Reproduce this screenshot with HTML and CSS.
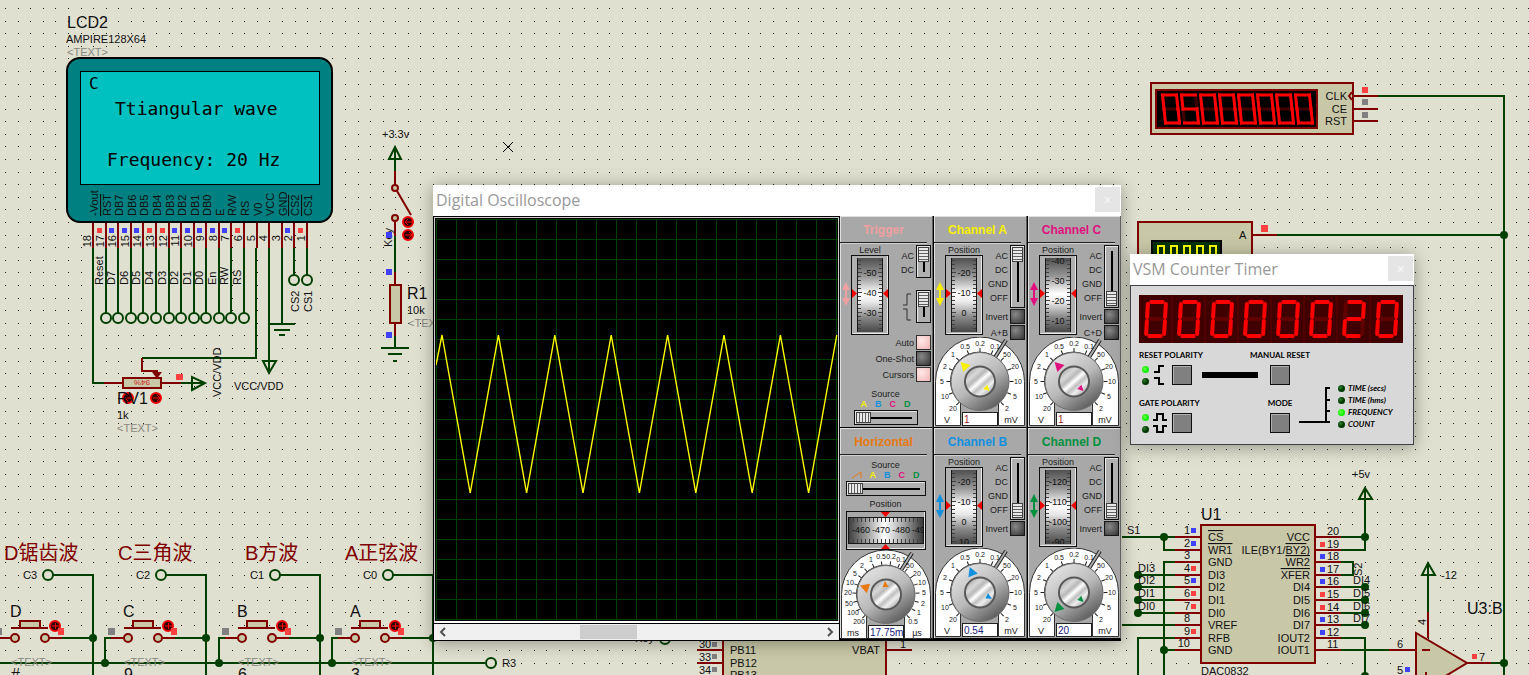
FILE: index.html
```html
<!DOCTYPE html>
<html lang="en">
<head>
    <meta charset="UTF-8">
    <title>Signal generator simulation</title>
    <link rel="stylesheet" href="styles.css">
</head>
<body>
    <main class="board">
        <svg class="schematic" id="schematic">
            <path id="dots" class="dots"></path>

            <!-- LCD -->
            <text x="67" y="28" class="name">LCD2</text>
            <text x="66" y="43">AMPIRE128X64</text>
            <text x="67" y="56" class="muted">&lt;TEXT&gt;</text>
            <rect x="67" y="58" width="265" height="164" rx="13" class="lcd-body"/>
            <rect x="80.5" y="71.5" width="239" height="113" class="lcd-screen"/>
            <text x="89" y="89" class="lcd-text thin">C</text>
            <text x="115" y="115" class="lcd-text">Ttiangular wave</text>
            <text x="107" y="166" class="lcd-text">Frequency: 20 Hz</text>
            <g id="lcd-pins"></g>
            <path class="wire" d="M93 248V383H104M256 248V358H142M269 248V373M282 248V324M269 324H295M274 330H290M279 335H285M294 248V275M307 248V275"/>
            <path class="wire" d="M263 361H276L269 373Z"/>
            <circle cx="294" cy="280" r="5" class="ring"/>
            <circle cx="307" cy="280" r="5" class="ring"/>
            <text transform="translate(299 312) rotate(-90)">CS2</text>
            <text transform="translate(312 312) rotate(-90)">CS1</text>
            <text x="234" y="390">VCC/VDD</text>
            <text transform="translate(221 397) rotate(-90)">VCC/VDD</text>

            <!-- RV1 -->
            <path class="pin" d="M104 383H122M162 383H181M142 358V371H157V377"/>
            <path class="pin solid" d="M154 373H160L157 377Z"/>
            <rect x="123" y="378" width="38" height="10" class="part"/>
            <path class="wire" d="M181 383H205M192 377V390L205 383Z"/>
            <text transform="translate(150 380) rotate(180)" class="wiper">94%</text>
            <rect x="176" y="374" width="7" height="6" class="hi"/>
            <g class="actuator"><circle cx="128" cy="398" r="5"/><path d="M125 398H132M128 395L125 398L128 401"/></g>
            <g class="actuator"><circle cx="156" cy="398" r="5"/><path d="M153 398H160M157 395L160 398L157 401"/></g>
            <text x="117" y="404" class="name">RV1</text>
            <text x="117" y="419">1k</text>
            <text x="117" y="432" class="muted">&lt;TEXT&gt;</text>

            <!-- key switch and R1 -->
            <text x="382" y="138">+3.3v</text>
            <path class="wire" d="M395 147V171M389 159H401L395 147ZM395 236V272M395 336V348M381 348H409M388 354H402M393 361H397"/>
            <path class="pin" d="M395 171V185M395 222V236M395 272V285M395 323V336"/>
            <path class="pin slope" d="M397 191L411 215"/>
            <circle cx="395" cy="188" r="3" class="contact"/>
            <circle cx="395" cy="218" r="3" class="contact"/>
            <rect x="390" y="285" width="11" height="38" class="part"/>
            <text transform="translate(392 247) rotate(-90)">Key</text>
            <path class="lo" d="M386 232h6v6h-6zM386 269h6v6h-6zM386 332h6v6h-6z"/>
            <g class="actuator"><circle cx="408" cy="222" r="5"/><path d="M405 222H412M408 219L405 222L408 225"/></g>
            <g class="actuator"><circle cx="408" cy="235" r="5"/><path d="M405 235H412M409 232L412 235L409 238"/></g>
            <text x="407" y="299" class="name">R1</text>
            <text x="407" y="314">10k</text>
            <text x="408" y="327" class="muted">&lt;TEXT&gt;</text>
            <path class="origin" d="M503 142L513 152M513 142L503 152"/>

            <!-- keypad -->
            <path class="wire" d="M0 663H485"/>
            <g id="keypad"></g>
            <circle cx="491" cy="663" r="5" class="ring"/>
            <text x="502" y="667">R3</text>

            <!-- MCU -->
            <text x="635" y="642">Key</text>
            <circle cx="665" cy="639" r="5" class="ring"/>
            <rect x="723" y="560" width="163" height="140" class="part"/>
            <path class="pin" d="M697 650H722M697 663H722M697 676H722M887 650H912"/>
            <g>
                <text x="699" y="648">30</text><text x="699" y="661">33</text><text x="699" y="674">34</text>
                <text x="730" y="641">PB10</text><text x="730" y="654">PB11</text><text x="730" y="667">PB12</text><text x="730" y="679">PB13</text>
                <text x="880" y="654" class="end">VBAT</text><text x="900" y="648">1</text>
            </g>
            <path class="idle" d="M712 642h5v5h-5zM712 654h5v5h-5zM712 667h5v5h-5z"/>

            <!-- counter -->
            <rect x="1151" y="83" width="202" height="51" class="part"/>
            <rect x="1156" y="90" width="161" height="38" class="counter-screen"/>
            <g id="counter"></g>
            <text x="1347" y="100" class="end">CLK</text>
            <text x="1347" y="113" class="end">CE</text>
            <text x="1347" y="125" class="end">RST</text>
            <path class="pin" d="M1353 96H1378M1353 109H1378M1353 121H1378M1352 92L1349 96L1352 100"/>
            <rect x="1362" y="87" width="6" height="6" class="hi"/>
            <path class="idle" d="M1362 99h6v6h-6zM1362 112h6v6h-6z"/>
            <path class="wire" d="M1378 96H1504V675M1277 235H1504"/>
            <rect x="1138" y="222" width="114" height="60" class="part"/>
            <rect x="1152" y="241" width="69" height="30" class="meter-screen"/>
            <g id="meter"></g>
            <path class="pin" d="M1252 235H1277"/>
            <text x="1239" y="239">A</text>
            <rect x="1261" y="225" width="7" height="7" class="hi"/>
            <circle cx="1504" cy="235" r="4" class="node"/>

            <!-- DAC -->
            <text x="1201" y="520" class="name">U1</text>
            <text x="1201" y="675">DAC0832</text>
            <rect x="1201" y="525" width="114" height="138" class="part"/>
            <g id="dac-pins"></g>
            <path class="wire" d="M1122 537H1175M1164 537V550H1175M1175 562H1164V675M1164 650H1175M1138 575H1175M1138 587H1175M1138 600H1175M1138 613H1175M1122 625H1175M1175 638H1138V675"/>
            <path class="wire" d="M1341 537H1365M1341 550H1365V488M1359 499H1372L1365 488ZM1341 562H1353V575H1341M1341 587H1365M1341 600H1365M1341 613H1365M1341 625H1365M1341 638H1365V675M1341 650H1389"/>
            <g class="node">
                <circle cx="1164" cy="537" r="4"/><circle cx="1164" cy="650" r="4"/>
                <circle cx="1138" cy="575" r="4"/><circle cx="1138" cy="587" r="4"/><circle cx="1138" cy="600" r="4"/><circle cx="1138" cy="613" r="4"/>
                <circle cx="1365" cy="537" r="4"/><circle cx="1365" cy="587" r="4"/><circle cx="1365" cy="600" r="4"/><circle cx="1365" cy="613" r="4"/><circle cx="1365" cy="625" r="4"/><circle cx="1365" cy="676" r="4"/>
            </g>
            <text x="1127" y="534">S1</text>
            <text x="1138" y="572">DI3</text><text x="1138" y="584">DI2</text><text x="1138" y="597">DI1</text><text x="1138" y="610">DI0</text>
            <text x="1353" y="584">DI4</text><text x="1353" y="597">DI5</text><text x="1353" y="610">DI6</text><text x="1353" y="622">DI7</text>
            <text transform="translate(1362 576) rotate(-90)">S2</text>
            <text x="1352" y="478">+5v</text>

            <!-- op-amp -->
            <path class="part slope" d="M1416 633V694L1467 663Z"/>
            <path class="pin" d="M1389 650H1415M1422 650H1430M1428 612V638M1467 663H1491M1426 672V680"/>
            <path class="wire" d="M1428 563V612M1422 575H1435L1428 563ZM1491 663H1504"/>
            <circle cx="1504" cy="663" r="4" class="node"/>
            <text x="1441" y="579">-12</text>
            <text x="1467" y="614" class="name">U3:B</text>
            <text transform="translate(1426 625) rotate(-90)">4</text>
            <text x="1397" y="648">6</text><text x="1397" y="674">5</text><text x="1479" y="661">7</text>
            <rect x="1472" y="654" width="5" height="5" class="hi"/>
            <rect x="1405" y="667" width="5" height="5" class="lo"/>
        </svg>

        <section class="window scope">
            <header class="titlebar"><h1>Digital Oscilloscope</h1><button class="close" aria-label="Close">×</button></header>
            <div class="scope-main">
                <div class="display">
                    <div class="screen"><svg id="plot" width="402" height="401"></svg></div>
                    <div class="scrollbar">
                        <button aria-label="Scroll left"><svg width="8" height="10"><path d="M6 1L2 5L6 9"/></svg></button>
                        <span class="scroll-thumb"></span>
                        <button aria-label="Scroll right"><svg width="8" height="10"><path d="M2 1L6 5L2 9"/></svg></button>
                    </div>
                </div>
                <div class="panels">
                    <section class="panel trigger">
                        <h2>Trigger</h2>
                        <div class="controls">
                            <svg class="arrow" width="10" height="24"><path d="M5 0L9 8H6V16H9L5 24L1 16H4V8H1Z"/></svg>
                            <div class="wheel"><span>Level</span><svg class="drum" data-first="17" data-values="-50,-40,-30"></svg></div>
                            <div class="side">
                                <div class="switch short"><ul><li>AC</li><li>DC</li></ul><input type="range" min="0" max="1" value="0" aria-label="Trigger coupling"></div>
                                <div class="switch edge"><svg width="10" height="30"><path d="M1 13H5V2H9M1 17H5V28H9"/></svg><input type="range" min="0" max="1" value="0" aria-label="Trigger edge"></div>
                                <label class="first">Auto<input type="checkbox" checked></label>
                                <label>One-Shot<input type="checkbox"></label>
                                <label>Cursors<input type="checkbox" checked></label>
                            </div>
                        </div>
                        <div class="source">
                            <label for="trigger-source">Source</label>
                            <div class="letters"><b class="a">A</b><b class="b">B</b><b class="c">C</b><b class="d">D</b></div>
                            <input type="range" id="trigger-source" min="0" max="3" value="0">
                        </div>
                    </section>
                    <section class="panel a">
                        <h2>Channel A</h2>
                        <div class="controls">
                            <svg class="arrow" width="10" height="24"><path d="M5 0L9 8H6V16H9L5 24L1 16H4V8H1Z"/></svg>
                            <div class="wheel"><span>Position</span><svg class="drum" data-first="17" data-values="-20,-10,0"></svg></div>
                            <div class="side">
                                <div class="switch"><ul><li>AC</li><li>DC</li><li>GND</li><li>OFF</li></ul><input type="range" min="0" max="3" value="0" aria-label="Channel A coupling"></div>
                                <label>Invert<input type="checkbox"></label>
                                <label>A+B<input type="checkbox"></label>
                            </div>
                        </div>
                        <div class="dial-box"><svg class="dial" data-big="-45" data-small="135"></svg><input type="text" value="1" aria-label="Channel A scale"></div>
                    </section>
                    <section class="panel c">
                        <h2>Channel C</h2>
                        <div class="controls">
                            <svg class="arrow" width="10" height="24"><path d="M5 0L9 8H6V16H9L5 24L1 16H4V8H1Z"/></svg>
                            <div class="wheel"><span>Position</span><svg class="drum" data-first="5" data-values="-40,-30,-20,-10"></svg></div>
                            <div class="side">
                                <div class="switch"><ul><li>AC</li><li>DC</li><li>GND</li><li>OFF</li></ul><input type="range" min="0" max="3" value="3" aria-label="Channel C coupling"></div>
                                <label>Invert<input type="checkbox"></label>
                                <label>C+D<input type="checkbox"></label>
                            </div>
                        </div>
                        <div class="dial-box"><svg class="dial" data-big="-45" data-small="135"></svg><input type="text" value="1" aria-label="Channel C scale"></div>
                    </section>
                    <section class="panel horizontal">
                        <h2>Horizontal</h2>
                        <div class="source">
                            <label for="time-source">Source</label>
                            <div class="letters"><svg width="10" height="8"><path d="M0 7L9 1V7"/></svg><b class="a">A</b><b class="b">B</b><b class="c">C</b><b class="d">D</b></div>
                            <input type="range" id="time-source" min="0" max="4" value="0">
                        </div>
                        <div class="flat-wheel"><span>Position</span><svg id="time-drum" width="78" height="37"></svg></div>
                        <div class="dial-box"><svg class="dial time" data-big="-71" data-small="-4"></svg><input type="text" value="17.75m" aria-label="Time base"></div>
                    </section>
                    <section class="panel b">
                        <h2>Channel B</h2>
                        <div class="controls">
                            <svg class="arrow" width="10" height="24"><path d="M5 0L9 8H6V16H9L5 24L1 16H4V8H1Z"/></svg>
                            <div class="wheel"><span>Position</span><svg class="drum" data-first="14" data-values="-20,-10,0,10"></svg></div>
                            <div class="side">
                                <div class="switch"><ul><li>AC</li><li>DC</li><li>GND</li><li>OFF</li></ul><input type="range" min="0" max="3" value="3" aria-label="Channel B coupling"></div>
                                <label>Invert<input type="checkbox"></label>
                            </div>
                        </div>
                        <div class="dial-box"><svg class="dial" data-big="-22" data-small="117"></svg><input type="text" value="0.54" aria-label="Channel B scale"></div>
                    </section>
                    <section class="panel d">
                        <h2>Channel D</h2>
                        <div class="controls">
                            <svg class="arrow" width="10" height="24"><path d="M5 0L9 8H6V16H9L5 24L1 16H4V8H1Z"/></svg>
                            <div class="wheel"><span>Position</span><svg class="drum" data-first="14" data-values="-120,-110,-100,-90"></svg></div>
                            <div class="side">
                                <div class="switch"><ul><li>AC</li><li>DC</li><li>GND</li><li>OFF</li></ul><input type="range" min="0" max="3" value="3" aria-label="Channel D coupling"></div>
                                <label>Invert<input type="checkbox"></label>
                            </div>
                        </div>
                        <div class="dial-box"><svg class="dial" data-big="-135" data-small="135"></svg><input type="text" value="20" aria-label="Channel D scale"></div>
                    </section>
                </div>
            </div>
        </section>

        <section class="window timer">
            <header class="titlebar"><h1>VSM Counter Timer</h1><button class="close" aria-label="Close">×</button></header>
            <div class="timer-body">
                <svg id="led" class="led" width="264" height="48"></svg>
                <div class="timer-controls">
                    <div class="polarity">
                        <span>RESET POLARITY</span>
                        <div class="line">
                            <div class="lamps"><i class="lamp on"></i><i class="lamp"></i></div>
                            <svg width="12" height="20"><path d="M1 7H6V1H11M1 13H6V19H11"/></svg>
                            <button class="push" aria-label="Reset polarity"></button>
                            <i class="link"></i>
                        </div>
                    </div>
                    <div class="push-group"><span>MANUAL RESET</span><button class="push" aria-label="Manual reset"></button></div>
                    <div class="polarity">
                        <span>GATE POLARITY</span>
                        <div class="line">
                            <div class="lamps"><i class="lamp on"></i><i class="lamp"></i></div>
                            <svg width="14" height="20"><path d="M0 7H4V1H10V7H14M0 13H4V19H10V13H14"/></svg>
                            <button class="push" aria-label="Gate polarity"></button>
                        </div>
                    </div>
                    <div class="push-group"><span>MODE</span><button class="push" aria-label="Mode"></button></div>
                    <div class="modes">
                        <svg width="32" height="36"><path d="M0 35H31M27 35V1H31M27 13H31M27 24H31"/></svg>
                        <ul>
                            <li><i class="lamp"></i>TIME (secs)</li>
                            <li><i class="lamp"></i>TIME (hms)</li>
                            <li><i class="lamp on"></i>FREQUENCY</li>
                            <li><i class="lamp"></i>COUNT</li>
                        </ul>
                    </div>
                </div>
            </div>
        </section>
    </main>
    <script src="script.js"></script>
</body>
</html>
```

FILE: styles.css
```css
body {
    margin: 0;
    font-family: "Liberation Sans", Arial, sans-serif;
    font-size: 11px;
    color: #000;
}

ul {
    list-style: none;
    margin: 0;
    padding: 0;
}

button,
input {
    margin: 0;
    padding: 0;
    border: 0;
    border-radius: 0;
    box-sizing: border-box;
}

.board {
    position: relative;
    width: 100%;
    height: 100vh;
    overflow: hidden;
    background: #e0e0d0;
}

/* schematic */
.schematic {
    display: block;
    width: 100%;
    height: 100%;
    fill: #101010;
    font-family: "Liberation Sans", "Noto Sans CJK SC", sans-serif;
}

.dots {
    stroke: #202020;
    shape-rendering: crispEdges;
}

.name {
    font-size: 16px;
}

.muted {
    fill: #888880;
}

.end {
    text-anchor: end;
}

.over {
    text-decoration: overline;
}

.wire {
    fill: none;
    stroke: #004000;
    stroke-width: 2;
}

.ring {
    fill: #e0e0d0;
    stroke: #004000;
    stroke-width: 2;
}

.node {
    fill: #004000;
}

.pin {
    fill: none;
    stroke: #800000;
    stroke-width: 2;
}

.solid {
    fill: #800000;
}

.part {
    fill: #c8c8a8;
    stroke: #800000;
    stroke-width: 2;
}

.contact {
    fill: #c8c8a8;
    stroke: #800000;
    stroke-width: 2;
}

.hi {
    fill: #ff4040;
}

.lo {
    fill: #4040ff;
}

.idle {
    fill: #808080;
}

.origin {
    stroke: #000;
}

.actuator circle {
    fill: #300000;
    stroke: #f00000;
    stroke-width: 2;
}

.actuator path {
    fill: none;
    stroke: #ff0000;
}

.wiper {
    font-size: 8px;
    fill: #d02020;
}

.heading {
    font-size: 20px;
    fill: #800000;
}

.lcd-body {
    fill: #008080;
    stroke: #000;
    stroke-width: 2;
}

.lcd-screen {
    fill: #00c0c0;
    stroke: #000;
}

.lcd-text {
    font-family: "DejaVu Sans Mono", monospace;
    font-size: 18px;
    fill: #000;
}

.thin {
    font-size: 16px;
}

.counter-screen {
    fill: #000;
    stroke: #800000;
    stroke-width: 2;
}

.meter-screen {
    fill: #003000;
    stroke: #000;
    stroke-width: 2;
}

/* windows */
.window {
    position: absolute;
    background: #fff;
    box-shadow: 0 2px 16px rgba(0, 0, 0, 0.35);
}

.scope {
    left: 433px;
    top: 185px;
}

.timer {
    left: 1130px;
    top: 254px;
    width: 284px;
}

.titlebar {
    display: flex;
    justify-content: space-between;
    height: 31px;
}

.titlebar h1 {
    margin: 0;
    padding-left: 3px;
    font: 400 16px/31px "Open Sans", "Noto Sans", sans-serif;
    color: #999;
}

.close {
    width: 25px;
    height: 25px;
    margin: 2px 1px 0 0;
    background: #e5e5e5;
    color: #f8f8f8;
    font-size: 14px;
    line-height: 20px;
}

.scope-main {
    display: flex;
    background: #000;
    padding-bottom: 1px;
}

.display {
    display: flex;
    flex-direction: column;
    padding: 1px 0 0 1px;
}

.screen {
    padding: 1px 0 1px 1px;
    border: 1px solid #ccc;
    border-bottom: 2px solid #fff;
    background: #000;
}

.screen svg {
    display: block;
}

.scrollbar {
    display: flex;
    justify-content: space-between;
    align-items: center;
    height: 16px;
    margin-top: 1px;
    background: #f0f0f0;
}

.scrollbar button {
    width: 18px;
    height: 16px;
    background: none;
}

.scrollbar path {
    fill: none;
    stroke: #505050;
    stroke-width: 2;
}

.scroll-thumb {
    width: 57px;
    height: 14px;
    margin-right: 57px;
    background: #cdcdcd;
}

.panels {
    display: grid;
    grid-template-columns: repeat(3, 94px);
    grid-template-rows: 212px 211px;
}

.panel {
    --ink: #f0a0a0;
    display: flex;
    flex-direction: column;
    box-sizing: border-box;
    padding: 0 1px 1px 0;
    border: 1px solid #000;
    border-width: 0 0 1px 1px;
    border-right: 1px solid #606060;
    background: #a8a8a8;
    box-shadow: inset 1px 1px #e0e0e0;
    font-size: 9px;
    color: #202020;
}

.a {
    --ink: #f8f000;
}

.b {
    --ink: #1090e0;
}

.c {
    --ink: #e0107f;
}

.d {
    --ink: #009040;
}

.horizontal {
    --ink: #e87810;
}

.panel h2 {
    flex: none;
    margin: 0 4px 1px 0;
    height: 26px;
    border-bottom: 1px solid #202020;
    box-shadow: 0 1px #d0d0d0;
    font-size: 12px;
    line-height: 29px;
    text-align: center;
    color: var(--ink);
}

.controls {
    display: flex;
    padding-left: 1px;
}

.arrow {
    flex: none;
    margin-top: 38px;
    fill: var(--ink);
}

.wheel {
    flex: none;
    width: 38px;
    text-align: center;
    white-space: nowrap;
}

.wheel span {
    display: block;
    padding-top: 1px;
    line-height: 10px;
}

.drum {
    display: block;
    width: 38px;
    height: 80px;
}

.drum text,
#time-drum text {
    text-anchor: middle;
    fill: #101010;
}

.side {
    flex: 1;
    min-width: 0;
    display: flex;
    flex-direction: column;
    align-items: flex-end;
    padding-top: 1px;
}

.side label {
    display: flex;
    align-items: center;
    height: 15px;
    margin-top: 1px;
    gap: 2px;
    white-space: nowrap;
}

.side .first {
    margin-top: 12px;
}

.switch {
    display: flex;
    gap: 2px;
    height: 63px;
    text-align: right;
}

.switch li {
    height: 14px;
    line-height: 14px;
}

.switch ul {
    padding-top: 4px;
}

.short {
    height: 33px;
}

.edge {
    height: 33px;
    margin-top: 12px;
}

.edge svg {
    margin: 2px 2px 0 0;
    fill: none;
    stroke: #303030;
}

input[type="checkbox"] {
    appearance: none;
    width: 15px;
    height: 15px;
    border: 1px solid #181818;
    background: radial-gradient(circle at 35% 35%, #888, #333);
}

input[type="checkbox"]:checked {
    border-color: #303030;
    background: radial-gradient(circle at 35% 35%, #ffe8e8, #f0b4b4);
}

input[type="range"] {
    appearance: none;
    height: 15px;
    border: 1px solid #101010;
    padding: 1px;
    background: linear-gradient(#000, #000) center / calc(100% - 10px) 2px no-repeat #b0b0b0;
    box-shadow: inset 1px 1px #e8e8e8;
}

input[type="range"]::-webkit-slider-thumb {
    appearance: none;
    width: 15px;
    height: 11px;
    border: 1px solid #404040;
    background: repeating-linear-gradient(90deg, #e8e8e8 0 2px, #606060 2px 3px);
}

.switch input[type="range"] {
    writing-mode: vertical-lr;
    width: 15px;
    height: 100%;
    background: linear-gradient(#000, #000) center / 2px calc(100% - 10px) no-repeat #b0b0b0;
}

.switch input[type="range"]::-webkit-slider-thumb {
    width: 11px;
    height: 15px;
    background: repeating-linear-gradient(#e8e8e8 0 2px, #606060 2px 3px);
}

.source {
    display: flex;
    flex-direction: column;
    align-items: center;
    margin-top: auto;
    line-height: 10px;
}

.trigger .source input {
    width: 64px;
}

.trigger .source {
    padding-bottom: 1px;
}

.horizontal .source {
    margin-top: 4px;
}

.horizontal .source input {
    width: 80px;
}

.letters {
    display: flex;
    align-items: center;
    height: 10px;
    margin-bottom: 1px;
    gap: 8px;
    font-size: 9px;
}

.letters b {
    color: var(--ink);
}

.letters path {
    fill: none;
    stroke: var(--ink);
}

.flat-wheel {
    display: flex;
    flex-direction: column;
    align-items: center;
    margin-top: 3px;
    line-height: 10px;
}

#time-drum {
    margin-top: 2px;
    border: 1px solid #101010;
}

.a .controls,
.c .controls {
    height: 91px;
}

.dial-box {
    position: relative;
    margin-top: auto;
    padding-left: 1px;
}

.dial {
    display: block;
    width: 90px;
    height: 89px;
}

.dial text {
    font-size: 7px;
    text-anchor: middle;
    fill: #202020;
}

.dial .unit {
    font-size: 9px;
}

.dial .pointer {
    fill: var(--ink);
}

/* readout lies over the bottom of the dial */
.dial-box input {
    position: absolute;
    left: 28px;
    bottom: 0;
    width: 36px;
    height: 14px;
    border: 1px solid #202020;
    padding-left: 1px;
    background: #fff;
    font: 10px "Liberation Sans", sans-serif;
    color: #202080;
}

.panel.a .dial-box input,
.panel.c .dial-box input {
    color: #a02020;
}

/* counter timer */
.timer-body {
    padding: 9px 8px 11px;
    border: 1px solid #404048;
    background: #d8d8d8;
}

.led {
    display: block;
    background: #400000;
}

.timer-controls {
    display: grid;
    grid-template-columns: 131px 20px 1fr;
    row-gap: 13px;
    padding-top: 7px;
    font: 700 8px/10px Lato, sans-serif;
}

.line {
    display: flex;
    align-items: center;
    margin-top: 5px;
    padding-left: 3px;
}

.lamps {
    display: flex;
    flex-direction: column;
    gap: 5px;
}

.line svg {
    width: 14px;
    margin: 0 5px 0 4px;
    fill: none;
    stroke: #000;
    stroke-width: 2;
}

.lamp {
    flex: none;
    width: 7px;
    height: 7px;
    border-radius: 50%;
    background: radial-gradient(circle at 35% 35%, #308030, #003800 50%);
}

.lamp.on {
    background: radial-gradient(circle at 40% 40%, #60ff40, #10f000 60%);
}

.push {
    flex: none;
    width: 20px;
    height: 20px;
    border: 1px solid #101010;
    background: #808080;
    box-shadow: inset 1px 1px #b0b0b0;
}

.link {
    width: 56px;
    height: 6px;
    margin-left: 10px;
    background: #000;
}

.push-group {
    display: flex;
    flex-direction: column;
    align-items: center;
    gap: 5px;
    white-space: nowrap;
}

.modes {
    grid-column: 3;
    grid-row: 1 / 3;
    display: flex;
    align-self: end;
    padding: 0 0 3px 9px;
    font-style: italic;
    white-space: nowrap;
}

.modes svg {
    margin-top: 5px;
    fill: none;
    stroke: #000;
    stroke-width: 2;
}

.modes ul {
    padding-left: 7px;
}

.modes li {
    display: flex;
    align-items: center;
    gap: 3px;
    height: 12px;
}
```

FILE: script.js
```js
const GRID = 12.59;

function get(id) {
    return document.getElementById(id);
}

function square(x, y, state) {
    const names = {r: "hi", b: "lo", g: "idle"};
    return names[state] ? `<rect x="${x}" y="${y}" width="5" height="5" class="${names[state]}"/>` : "";
}

function drawDots() {
    let d = "";
    for (let i = 0; i * GRID < window.innerWidth; i++) {
        for (let j = 0; j * GRID < window.innerHeight; j++) {
            d += `M${Math.round(5 + i * GRID)} ${Math.round(8 + j * GRID) + 0.5}h1`;
        }
    }
    get("dots").setAttribute("d", d);
}

function drawLcdPins() {
    const names = ["-Vout", "RST", "DB7", "DB6", "DB5", "DB4", "DB3", "DB2", "DB1", "DB0", "E", "R/W", "RS", "V0", "VCC", "GND", "CS2", "CS1"];
    const nets = ["", "Reset", "D7", "D6", "D5", "D4", "D3", "D2", "D1", "D0", "En", "RW", "RS"];
    const states = "-rbbbrrbbbbbr---br";
    let html = "";
    names.forEach((name, i) => {
        const x = Math.round(93 + i * GRID);
        const over = ["RST", "CS2", "CS1"].includes(name) ? "over" : "";
        html += `<path class="pin" d="M${x} 223V248"/>`;
        html += `<text transform="translate(${x + 5} 216) rotate(-90)" class="${over}">${name}</text>`;
        html += `<text transform="translate(${x - 2} 235) rotate(-90)" class="end">${18 - i}</text>`;
        html += square(x - 9, 228, states[i]);
        if (nets[i]) {
            html += `<path class="wire" d="M${x} 248V313"/><circle cx="${x}" cy="318" r="5" class="ring"/>`;
            html += `<text transform="translate(${x - 3} 285) rotate(-90)">${nets[i]}</text>`;
        }
    });
    get("lcd-pins").innerHTML = html;
}

function drawKeypad() {
    const keys = [
        {title: "D锯齿波", tx: 4, net: "C3", key: "D", below: "#"},
        {title: "C三角波", tx: 118, net: "C2", key: "C", below: "9"},
        {title: "B方波", tx: 245, net: "C1", key: "B", below: "6"},
        {title: "A正弦波", tx: 345, net: "C0", key: "A", below: "3"}
    ];
    let html = "";
    keys.forEach((k, i) => {
        const x = Math.round(i * 9 * GRID);
        html += `<text x="${k.tx}" y="560" class="heading">${k.title}</text>
            <text x="${x + 23}" y="579">${k.net}</text>
            <path class="wire" d="M${x + 53} 575H${x + 93}V675M${x + 62} 638H${x + 93}"/>
            <circle cx="${x + 48}" cy="575" r="5" class="ring"/>
            <text x="${x + 10}" y="617" class="name">${k.key}</text>
            <rect x="${x + 20}" y="621" width="20" height="7" class="part"/>
            <path class="pin" d="M${x + 11} 628H${x + 48}M${x - 2} 638H${x + 11}M${x + 49} 638H${x + 62}"/>
            <path class="wire" d="M${x - 2} 638H${x - 8}V663"/>
            <circle cx="${x - 8}" cy="663" r="4" class="node"/><circle cx="${x + 93}" cy="638" r="4" class="node"/>
            <circle cx="${x + 15}" cy="638" r="4" class="contact"/><circle cx="${x + 45}" cy="638" r="4" class="contact"/>
            <g class="actuator"><circle cx="${x + 55}" cy="626" r="5"/><path d="M${x + 52} 626h7M${x + 55.5} 623v6"/></g>
            <rect x="${x + 58}" y="628" width="6" height="7" class="hi"/>
            <rect x="${x - 5}" y="628" width="7" height="7" class="idle"/>
            <text x="${x + 11}" y="666" class="muted">&lt;TEXT&gt;</text>
            <text x="${x + 11}" y="680" class="name">${k.below}</text>`;
    });
    get("keypad").innerHTML = html;
}

function drawDacPins() {
    const left = ["~CS", "~WR1", "GND", "DI3", "DI2", "DI1", "DI0", "VREF", "RFB", "GND"];
    const right = ["VCC", "ILE(BY1/~BY2)", "~WR2", "~XFER", "DI4", "DI5", "DI6", "DI7", "IOUT2", "IOUT1"];
    const over = name => name.replace(/~(\w+)/, '<tspan class="over">$1</tspan>');
    let html = "";
    for (let i = 0; i < 10; i++) {
        const y = Math.round(537 + i * GRID);
        html += `<path class="pin" d="M1175 ${y}H1200M1316 ${y}H1341"/>
            <text x="1208" y="${y + 4}">${over(left[i])}</text>
            <text x="1310" y="${y + 4}" class="end">${over(right[i])}</text>
            <text x="1190" y="${y - 3}" class="end">${i + 1}</text>
            <text x="1327" y="${y - 2}">${20 - i}</text>`;
        html += square(1191, y - 9, "bb-rbrr-r-"[i]) + square(1320, y - 8, "-rbbbrrbb-"[i]);
    }
    get("dac-pins").innerHTML = html;
}

// segments: top, upper right, lower right, bottom, lower left, upper left, middle
const DIGITS = {0: "1111110", 2: "1101101", 5: "1011011"};

function sevenSegment(text, o) {
    let html = "";
    [...text].forEach((ch, i) => {
        const x = o.x + i * o.pitch;
        const p = (px, py) => `${x + px * o.w + o.lean * (py - 0.5)} ${o.y + py * o.h}`;
        const g = o.gap;
        const m = g / 3;
        const segs = [
            [p(g, 0), p(1 - g, 0)], [p(1, m), p(1, 0.5 - m)], [p(1, 0.5 + m), p(1, 1 - m)],
            [p(g, 1), p(1 - g, 1)], [p(0, 0.5 + m), p(0, 1 - m)], [p(0, m), p(0, 0.5 - m)], [p(g, 0.5), p(1 - g, 0.5)]
        ];
        const order = segs.map((s, n) => ({s, on: DIGITS[ch][n] === "1"})).sort((a, b) => a.on - b.on);
        order.forEach(({s, on}) => {
            html += `<path d="M${s[0]}L${s[1]}" stroke="${on ? o.on : o.off}" stroke-width="${o.size}" stroke-linecap="${o.cap}"/>`;
        });
    });
    return html;
}

function drawPlot() {
    let html = "";
    for (let i = 0; i <= 20; i++) {
        html += `<path d="M${i * 20 + 0.5} 0V401M0 ${i * 20 + 0.5}H402" stroke="#004000"/>`;
    }
    let points = "0,146";
    for (let i = 0; i < 15; i++) {
        points += ` ${6 + i * 28.2},${i % 2 ? 274 : 116}`;
    }
    html += `<polyline points="${points}" fill="none" stroke="#ffff00" stroke-width="1.4"/>`;
    get("plot").innerHTML = html;
}

function drawDrums() {
    document.querySelectorAll(".drum").forEach((drum, n) => {
        const values = drum.dataset.values.split(",");
        const first = Number(drum.dataset.first);
        let html = `<defs>
            <linearGradient id="v${n}" x2="0" y2="1"><stop offset="0" stop-color="#505050"/><stop offset=".25" stop-color="#989898"/><stop offset=".48" stop-color="#fff"/><stop offset=".6" stop-color="#e8e8e8"/><stop offset=".8" stop-color="#888"/><stop offset="1" stop-color="#484848"/></linearGradient>
            <clipPath id="k${n}"><rect x="7" y="3" width="24" height="74"/></clipPath></defs>
            <rect x=".5" y=".5" width="37" height="79" fill="#b0b0b0" stroke="#101010"/>
            <path d="M1.5 78.500H36.500V1" fill="none" stroke="#e8e8e8"/>
            <rect x="6" y="3" width="26" height="74" fill="#181818"/><rect x="7" y="3" width="24" height="74" fill="url(#v${n})"/><g clip-path="url(#k${n})">`;
        for (let y = first - 20; y < 80; y += 4) {
            const long = (y - first) % 20 === 0 ? 4 : 3;
            html += `<path d="M7 ${y + 0.5}h${long}M31 ${y + 0.5}h-${long}" stroke="#404040"/>`;
        }
        values.forEach((v, i) => {
            html += `<text x="19" y="${first + i * 20 + 4}">${v}</text>`;
        });
        html += `</g><path d="M1 34V43L6 38.500ZM37 34V43L32 38.500Z" fill="#f00000"/>`;
        drum.innerHTML = html;
    });

    let flat = `<defs><linearGradient id="h"><stop offset="0" stop-color="#404040"/><stop offset=".25" stop-color="#a0a0a0"/><stop offset=".48" stop-color="#fff"/><stop offset=".75" stop-color="#a0a0a0"/><stop offset="1" stop-color="#383838"/></linearGradient>
        <clipPath id="hk"><rect x="2" y="6" width="74" height="25"/></clipPath></defs>
        <path d="M.5 36.500H77.500V0" fill="none" stroke="#e8e8e8"/>
        <rect x="1" y="5" width="76" height="27" fill="#181818"/><rect x="2" y="6" width="74" height="25" fill="url(#h)"/><g clip-path="url(#hk)">`;
    for (let x = 2; x < 76; x += 4) {
        flat += `<path d="M${x + 0.5} 6v4M${x + 0.5} 31v-4" stroke="#404040"/>`;
    }
    ["-460", "-470", "-480", "-490"].forEach((v, i) => {
        flat += `<text x="${14 + i * 20}" y="21">${v}</text>`;
    });
    get("time-drum").innerHTML = flat + `</g><path d="M34 0H43L38.500 5ZM34 37H43L38.500 32Z" fill="#f00000"/>`;
}

function drawDials() {
    const volts = "20 10 5 2 1 0.5 0.2 0.1 50 20 10 5 2".split(" ");
    const time = "200 100 50 20 10 5 2 1 0.5 0.2 0.1 50 20 10 5 2 1 0.5".split(" ");
    document.querySelectorAll(".dial").forEach((dial, n) => {
        const isTime = dial.classList.contains("time");
        const labels = isTime ? time : volts;
        const step = 270 / (labels.length - 1);
        let html = `<defs>
            <linearGradient id="o${n}" x1=".2" y1=".1" x2=".8" y2=".95"><stop offset="0" stop-color="#e0e0e0"/><stop offset=".5" stop-color="#b8b8b8"/><stop offset="1" stop-color="#585858"/></linearGradient>
            <linearGradient id="i${n}" x1=".1" y1=".05" x2=".9" y2=".95"><stop offset="0" stop-color="#a0a0a0"/><stop offset=".25" stop-color="#d8d8d8"/><stop offset=".38" stop-color="#b8b8b8"/><stop offset=".5" stop-color="#fff"/><stop offset=".62" stop-color="#c0c0c0"/><stop offset=".75" stop-color="#eee"/><stop offset="1" stop-color="#909090"/></linearGradient></defs>
            <path d="M.5 88.500V44.500A44.500 44.500 0 0 1 89.500 44.500V88.500H63.500V66A29 29 0 1 0 25.500 66V88.500Z" fill="#fff" stroke="#303030"/>
            <path d="M59 22L71 3" stroke="#202020" stroke-width="4"/><path d="M59 22L71 3" stroke="#a8a8a8" stroke-width="2"/>`;
        labels.forEach((label, i) => {
            const deg = i * step - 135;
            const a = deg * Math.PI / 180;
            html += `<path transform="rotate(${deg} 45 44.500)" d="M45 15V11" stroke="#202020"/>`;
            html += `<text x="${Math.round(45 + 38 * Math.sin(a))}" y="${Math.round(47 - 38 * Math.cos(a))}">${label}</text>`;
        });
        html += `<circle cx="45" cy="44.500" r="29" fill="url(#o${n})" stroke="#707070"/>
            <circle cx="45" cy="44.500" r="15" fill="url(#i${n})" stroke="#585858" stroke-width="2"/>
            <path class="pointer" transform="rotate(${dial.dataset.big} 45 44.500)" d="M45 17L50 26H40Z"/>
            <path class="pointer" transform="rotate(${dial.dataset.small} 45 44.500)" d="M45 31L48 37H42Z"/>
            <text x="12" y="86" class="unit">${isTime ? "ms" : "V"}</text><text x="76" y="86" class="unit">${isTime ? "µs" : "mV"}</text>`;
        dial.innerHTML = html;
    });
}

drawDots();
drawLcdPins();
drawKeypad();
drawDacPins();
drawPlot();
drawDrums();
drawDials();

get("counter").innerHTML = sevenSegment("05000000", {x: 1164, y: 95, w: 14, h: 28, pitch: 19, lean: 3, gap: 0, size: 3, cap: "square", on: "#ff0000", off: "#400000"});
get("meter").innerHTML = sevenSegment("00000", {x: 1158, y: 246, w: 6, h: 20, pitch: 13, lean: 0, gap: 0, size: 2, cap: "square", on: "#ffff00", off: "#003000"});

let cells = "";
for (let i = 1; i < 8; i++) {
    cells += `<path d="M${i * 33} 0V48" stroke="#600000"/>`;
}
get("led").innerHTML = cells + sevenSegment("00000020", {x: 8, y: 7, w: 18, h: 34, pitch: 33, lean: -2, gap: 0.18, size: 4, cap: "round", on: "#ff0000", off: "#600000"});
```
